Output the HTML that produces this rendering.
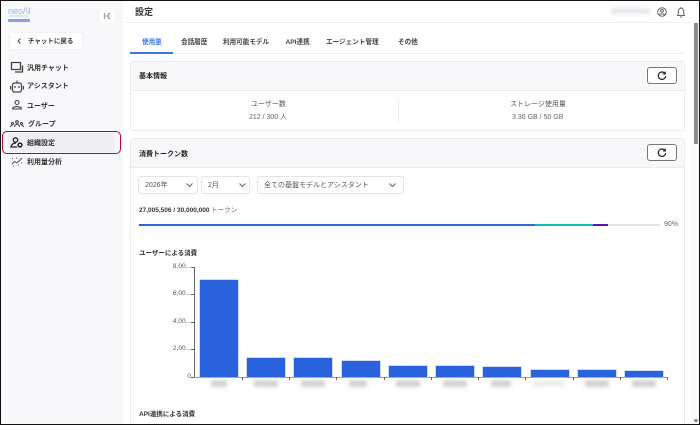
<!DOCTYPE html>
<html lang="ja"><head><meta charset="utf-8"><title>設定</title>
<style>
html,body{margin:0;padding:0;width:700px;height:425px;overflow:hidden;background:#fff}
body{position:relative;font-family:"Liberation Sans","Noto Sans CJK JP",sans-serif;color:#444}
#w{position:absolute;left:0;top:0;width:700px;height:425px;overflow:hidden;filter:blur(.3px)}
.a{position:absolute;white-space:nowrap}
.t{position:absolute;white-space:nowrap;line-height:12px}
.nav{font-size:7px;font-weight:700;color:#333}
.tab{font-size:6.6px;top:36.500px;color:#444;font-weight:700}
.card{position:absolute;background:#fff;border:1px solid #ececee;border-radius:3px;box-sizing:border-box}
.chd{position:absolute;background:#f8f8fa;border-bottom:1px solid #ececee}
.btn{position:absolute;left:647px;width:30px;height:17px;box-sizing:border-box;border:1px solid #777;border-radius:3px;background:#fff}
.sel{position:absolute;top:176px;height:18px;box-sizing:border-box;border:1px solid #e4e4e8;border-radius:3px;background:#fff;font-size:7px;color:#555;line-height:17px;padding-left:6px}
.bar{position:absolute;background:#2a62dc;box-shadow:0 0 0 .5px #9db8ef;width:38px}
.blur{position:absolute;top:380px;height:7px;background:#d2d2d2;filter:blur(1.800px);width:24px}
.yl{position:absolute;font-size:6.5px;color:#555;line-height:8px;right:509px}
.tick{position:absolute;background:#666}
svg{position:absolute;overflow:visible}
</style></head><body>
<div id="w">
<div class="a" style="left:0;top:0;width:123px;height:425px;background:#f8f8fb"></div>
<div class="a" style="left:123px;top:22px;width:568px;height:1px;background:#f0f0f2"></div>

<!-- logo -->
<div class="t" style="left:8px;top:5px;font-size:9px;color:#8fb7e8">neo/\I</div>
<div class="a" style="left:9px;top:15px;width:19px;height:2px;background:#dfe4ef"></div>
<div class="a" style="left:8px;top:19px;width:22px;height:3px;background:#8aa0dc;border-radius:1px"></div>

<!-- collapse -->
<div class="a" style="left:100px;top:9px;width:15px;height:14px;background:#fff;border-radius:2px"></div>
<svg style="left:100px;top:9px" width="15" height="14" fill="none" stroke="#999" stroke-width="1.300"><path d="M4.500 4v6M10 4L7 7l3 3"/></svg>

<!-- back -->
<div class="a" style="left:9px;top:32px;width:74px;height:18px;background:#fff;border-radius:2px;border:1px solid #f2f2f5;box-sizing:border-box"></div>
<svg style="left:17px;top:38px" width="6" height="6" fill="none" stroke="#444" stroke-width="1"><path d="M3.500 .5L1 3l2.500 2.500"/></svg>
<div class="t" style="left:28px;top:36px;font-size:6.500px;color:#333;font-weight:700">チャットに戻る</div>

<!-- highlight -->
<div class="a" style="left:8px;top:133px;width:107px;height:19px;background:#eeeff3;border-radius:2px"></div>

<!-- nav icons -->
<svg style="left:10px;top:61px" width="14" height="13" fill="none" stroke="#444" stroke-width="1.300"><path d="M1.500 1.500h9v7h-9zM12.500 4.500v7M5 11h7.500"/></svg>
<svg style="left:10px;top:80px" width="14" height="13" fill="none" stroke="#444" stroke-width="1.200"><rect x="2.500" y="3" width="9" height="9" rx="2"/><path d="M7 3V.5M.6 6v3.500M13.400 6v3.500M5 6v2M9 6v2"/></svg>
<svg style="left:11px;top:100px" width="12" height="10" fill="none" stroke="#444" stroke-width="1.100"><circle cx="6" cy="2.500" r="2"/><path d="M1.500 9c0-1.800 2-2.300 4.500-2.300s4.500.5 4.500 2.300z"/></svg>
<svg style="left:10px;top:120px" width="14" height="8" fill="none" stroke="#444" stroke-width="1.100"><circle cx="7" cy="2" r="1.300"/><circle cx="2.500" cy="3.500" r="1"/><circle cx="11.500" cy="3.500" r="1"/><path d="M4.500 7c0-2 1-2.500 2.500-2.500S9.500 5 9.500 7M.5 7c0-1 1-1.500 2-1.500M13.500 7c0-1-1-1.500-2-1.500"/></svg>
<svg style="left:10px;top:137px" width="13" height="11" fill="none" stroke="#222" stroke-width="1.300"><circle cx="5.500" cy="3" r="2.200"/><path d="M6 6C3 6 1.500 7.500 1 10h6"/><circle cx="10" cy="8" r="1.900" stroke-width="1.500"/></svg>
<svg style="left:11px;top:157px" width="12" height="9" fill="none" stroke="#555" stroke-width="1"><path d="M1 7l2.500-2.500L6 6l5-5"/><path d="M1 1.500h1M5 1h1M8 4h1M2 9h1M7 8h1M10 6h1"/></svg>

<!-- nav text -->
<div class="t nav" style="left:27px;top:62.500px">汎用チャット</div>
<div class="t nav" style="left:27px;top:81px">アシスタント</div>
<div class="t nav" style="left:27px;top:100.500px">ユーザー</div>
<div class="t nav" style="left:28px;top:118.500px">グループ</div>
<div class="t nav" style="left:27px;top:137.500px">組織設定</div>
<div class="t nav" style="left:27px;top:156.500px">利用量分析</div>

<!-- header -->
<div class="t" style="left:135px;top:6px;font-size:9px;color:#333;font-weight:700">設定</div>
<div class="a" style="left:611px;top:8px;width:39px;height:6px;background:#e6e8ec;filter:blur(1.800px)"></div>
<svg style="left:656px;top:6px" width="12" height="12" fill="none" stroke="#666" stroke-width="1"><circle cx="6" cy="6" r="4.300"/><circle cx="6" cy="4.800" r="1.400"/><path d="M3.300 8.800c1-1.300 4.400-1.300 5.400 0"/></svg>
<svg style="left:675px;top:6px" width="12" height="12" fill="none" stroke="#666" stroke-width="1"><path d="M2.500 9.500h7L8.700 8V5a2.700 2.700 0 0 0-5.400 0v3zM5 11h2M6 1v1"/></svg>

<!-- tabs -->
<div class="t tab" style="left:142px;color:#3b78e0">使用量</div>
<div class="t tab" style="left:181px">会話履歴</div>
<div class="t tab" style="left:223px">利用可能モデル</div>
<div class="t tab" style="left:285.500px">API連携</div>
<div class="t tab" style="left:326px">エージェント管理</div>
<div class="t tab" style="left:398px">その他</div>
<div class="a" style="left:130px;top:53px;width:555px;height:1px;background:#eceef0"></div>
<div class="a" style="left:130px;top:52px;width:43px;height:1.500px;background:#3b78e0"></div>

<!-- card 1 -->
<div class="card" style="left:130px;top:61px;width:555px;height:70px"></div>
<div class="chd" style="left:131px;top:62px;width:553px;height:28px"></div>
<div class="t" style="left:139px;top:71px;font-size:7px;font-weight:700;color:#222">基本情報</div>
<div class="btn" style="top:67px"></div>
<svg style="left:657px;top:71px" width="10" height="10" fill="none" stroke="#222" stroke-width="1.200"><path d="M8 2.500A3.700 3.700 0 1 0 8.700 5"/><path d="M8.300 .5v2.500H5.800" stroke-width="1"/></svg>
<div class="t" style="left:251px;top:98.500px;font-size:7px;color:#555">ユーザー数</div>
<div class="t" style="left:249px;top:112px;font-size:7px;color:#666">212 / 300 人</div>
<div class="a" style="left:398px;top:98px;width:1px;height:25px;background:#eceef0"></div>
<div class="t" style="left:510px;top:98.500px;font-size:7px;color:#555">ストレージ使用量</div>
<div class="t" style="left:512px;top:112px;font-size:7px;color:#666">3.36 GB / 50 GB</div>

<!-- card 2 -->
<div class="card" style="left:130px;top:138px;width:555px;height:300px"></div>
<div class="chd" style="left:131px;top:139px;width:553px;height:28px"></div>
<div class="t" style="left:139px;top:148.500px;font-size:7px;font-weight:700;color:#222">消費トークン数</div>
<div class="btn" style="top:144px"></div>
<svg style="left:657px;top:148px" width="10" height="10" fill="none" stroke="#222" stroke-width="1.200"><path d="M8 2.500A3.700 3.700 0 1 0 8.700 5"/><path d="M8.300 .5v2.500H5.800" stroke-width="1"/></svg>

<div class="sel" style="left:138px;width:60px">2026年</div>
<div class="sel" style="left:201px;width:49px">2月</div>
<div class="sel" style="left:257px;width:147px">全ての基盤モデルとアシスタント</div>
<svg style="left:186px;top:183px" width="7" height="4" fill="none" stroke="#666"><path d="M.5 .5L3.500 3.500 6.500 .5"/></svg>
<svg style="left:239px;top:183px" width="7" height="4" fill="none" stroke="#666"><path d="M.5 .5L3.500 3.500 6.500 .5"/></svg>
<svg style="left:389px;top:183px" width="7" height="4" fill="none" stroke="#666"><path d="M.5 .5L3.500 3.500 6.500 .5"/></svg>

<div class="t" style="left:139px;top:205px;font-size:6.500px;color:#666"><b style="color:#333">27,005,506 / 30,000,000</b> トークン</div>

<!-- progress -->
<div class="a" style="left:139px;top:224px;width:521px;height:2px;background:#e4e4e6"></div>
<div class="a" style="left:139px;top:224px;width:396px;height:2px;background:#2f66dc"></div>
<div class="a" style="left:535px;top:224px;width:58px;height:2px;background:#12bdb4"></div>
<div class="a" style="left:593px;top:224px;width:15px;height:2px;background:#6a0ea8"></div>
<div class="t" style="left:664px;top:218.500px;font-size:7px;color:#666">90%</div>

<div class="t" style="left:139px;top:248px;font-size:6.500px;font-weight:700;color:#333">ユーザーによる消費</div>

<!-- chart axes -->
<div class="tick" style="left:194px;top:267px;width:1px;height:111px"></div>
<div class="tick" style="left:194px;top:377px;width:474px;height:1px;background:#999"></div>
<div class="tick" style="left:191px;top:267px;width:3px;height:1px"></div>
<div class="tick" style="left:191px;top:294px;width:3px;height:1px"></div>
<div class="tick" style="left:191px;top:322px;width:3px;height:1px"></div>
<div class="tick" style="left:191px;top:349px;width:3px;height:1px"></div>
<div class="tick" style="left:191px;top:377px;width:3px;height:1px"></div>
<div class="yl" style="top:263px">8,00...</div>
<div class="yl" style="top:290px">6,00...</div>
<div class="yl" style="top:318px">4,00...</div>
<div class="yl" style="top:345px">2,00...</div>
<div class="yl" style="top:373px">0</div>

<div class="tick" style="left:242px;top:377px;width:1px;height:3px"></div>
<div class="tick" style="left:289px;top:377px;width:1px;height:3px"></div>
<div class="tick" style="left:336px;top:377px;width:1px;height:3px"></div>
<div class="tick" style="left:384px;top:377px;width:1px;height:3px"></div>
<div class="tick" style="left:431px;top:377px;width:1px;height:3px"></div>
<div class="tick" style="left:478px;top:377px;width:1px;height:3px"></div>
<div class="tick" style="left:525px;top:377px;width:1px;height:3px"></div>
<div class="tick" style="left:573px;top:377px;width:1px;height:3px"></div>
<div class="tick" style="left:620px;top:377px;width:1px;height:3px"></div>
<div class="tick" style="left:667px;top:377px;width:1px;height:3px"></div>

<div class="bar" style="left:200px;top:280px;height:97px"></div>
<div class="bar" style="left:247px;top:358px;height:19px"></div>
<div class="bar" style="left:294px;top:358px;height:19px"></div>
<div class="bar" style="left:342px;top:361px;height:16px"></div>
<div class="bar" style="left:389px;top:366px;height:11px"></div>
<div class="bar" style="left:436px;top:366px;height:11px"></div>
<div class="bar" style="left:483px;top:367px;height:10px"></div>
<div class="bar" style="left:531px;top:369.500px;height:7.500px"></div>
<div class="bar" style="left:578px;top:370px;height:7px"></div>
<div class="bar" style="left:625px;top:371px;height:6px"></div>

<div class="blur" style="left:211px;width:16px"></div>
<div class="blur" style="left:254px"></div>
<div class="blur" style="left:301px"></div>
<div class="blur" style="left:349px;width:18px"></div>
<div class="blur" style="left:396px"></div>
<div class="blur" style="left:443px"></div>
<div class="blur" style="left:491px;width:20px"></div>
<div class="blur" style="left:533px;width:32px;background:#eeeeee"></div>
<div class="blur" style="left:585px"></div>
<div class="blur" style="left:632px"></div>

<div class="t" style="left:139px;top:409px;font-size:6.500px;font-weight:700;color:#333">API連携による消費</div>

<!-- scrollbar -->
<div class="a" style="left:691px;top:23px;width:8px;height:402px;background:#fafafa"></div>
<div class="a" style="left:694px;top:23px;width:3.500px;height:121px;background:#8c8c8c"></div>
<svg style="left:693px;top:419px" width="6" height="4"><path d="M.5 .5h5L3 3.500z" fill="#666"/></svg>
</div>

<!-- red highlight frame -->
<div class="a" style="left:2px;top:131px;width:119px;height:22.500px;box-sizing:border-box;border:1.700px solid #ab1029;border-radius:5px"></div>

<!-- window frame -->
<div class="a" style="left:0;top:0;width:700px;height:425px;box-sizing:border-box;border:1px solid #111"></div>
</body></html>
